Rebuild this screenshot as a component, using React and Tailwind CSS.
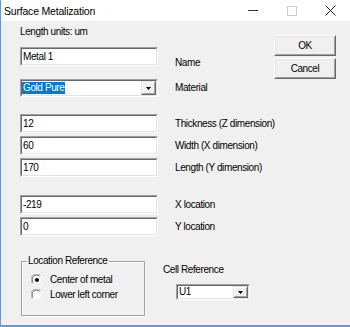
import React from "react";

function Sunken({ className, children }) {
  return (
    <div className={`border border-t-[#a0a0a0] border-l-[#a0a0a0] border-r-white border-b-white ${className}`}>
      <div className="h-full w-full border border-t-[#696969] border-l-[#696969] border-r-[#e3e3e3] border-b-[#e3e3e3] bg-white flex items-center">
        {children}
      </div>
    </div>
  );
}

function Arrow() {
  return (
    <div className="h-full w-[15px] ml-auto border border-t-[#e3e3e3] border-l-[#e3e3e3] border-r-[#696969] border-b-[#696969] bg-[#f0f0f0]">
      <div className="h-full w-full border border-t-white border-l-white border-r-[#a0a0a0] border-b-[#a0a0a0] flex items-center justify-center">
        <svg width="5" height="3" viewBox="0 0 5 3">
          <path d="M0 0H5L2.5 3Z" fill="#000" />
        </svg>
      </div>
    </div>
  );
}

function Button({ children }) {
  return (
    <div className="h-[21px] w-[62px] border border-t-white border-l-white border-r-[#696969] border-b-[#696969] bg-[#f0f0f0]">
      <div className="h-full w-full border border-t-[#e3e3e3] border-l-[#e3e3e3] border-r-[#a0a0a0] border-b-[#a0a0a0] flex items-center justify-center">
        {children}
      </div>
    </div>
  );
}

function Radio({ checked }) {
  return (
    <svg width="12" height="12" viewBox="0 0 12 12">
      <circle cx="6" cy="6" r="5.5" fill="#fff" />
      <path d="M1.5 9.5A5 5 0 0 1 9.5 1.5" fill="none" stroke="#a0a0a0" strokeWidth="1" />
      <path d="M2.4 8.6A3.8 3.8 0 0 1 8.6 2.4" fill="none" stroke="#696969" strokeWidth="1" />
      <path d="M10.5 2.5A5 5 0 0 1 2.5 10.5" fill="none" stroke="#ffffff" strokeWidth="1" />
      <path d="M9.6 3.4A3.8 3.8 0 0 1 3.4 9.6" fill="none" stroke="#e3e3e3" strokeWidth="1" />
      {checked && <circle cx="6" cy="6" r="2" fill="#000" />}
    </svg>
  );
}

function Row({ value, label, top }) {
  return (
    <div className={`flex items-center ${top}`}>
      <Sunken className="w-[138px] h-[19px] shrink-0">
        <span className="pl-[1px]">{value}</span>
      </Sunken>
      <span className="ml-[17px] whitespace-nowrap">{label}</span>
    </div>
  );
}

export default function App() {
  return (
    <div className="w-[350px] h-[327px] bg-[#f0f0f0] border-l border-b-2 border-[#5a9ee0] font-['Liberation_Sans',Arial,sans-serif] text-[10px] tracking-[-0.4px] leading-[12px] text-black flex flex-col overflow-hidden">
      <div className="h-[21px] bg-white flex items-center shrink-0">
        <span className="pl-[3px] text-[10.5px] tracking-[-0.2px]">Surface Metalization</span>
        <div className="ml-auto flex h-full">
          <div className="w-[39px] flex items-center justify-center">
            <div className="w-[10px] h-px bg-[#333]" />
          </div>
          <div className="w-[39px] flex items-center justify-center">
            <div className="w-[10px] h-[10px] border border-[#cccccc]" />
          </div>
          <div className="w-[39px] flex items-center justify-center">
            <svg width="11" height="11" viewBox="0 0 11 11">
              <path d="M0.5 0.5L10.5 10.5M10.5 0.5L0.5 10.5" stroke="#222" strokeWidth="1" />
            </svg>
          </div>
        </div>
      </div>

      <div className="flex">
        <div className="flex flex-col pl-[19px] flex-1 min-w-0 whitespace-nowrap">
          <div className="mt-[5px] h-[12px]">Length units: um</div>
          <div className="flex items-start mt-[9px]">
            <Sunken className="w-[138px] h-[19px] shrink-0">
              <span className="pl-[1px]">Metal 1</span>
            </Sunken>
            <span className="ml-[17px] mt-[10px]">Name</span>
          </div>
          <div className="flex items-center mt-[10px]">
            <Sunken className="w-[138px] h-[18px] shrink-0">
              <span className="h-[12px] bg-[#0078d7] text-white px-[1px]">Gold Pure</span>
              <Arrow />
            </Sunken>
            <span className="ml-[17px]">Material</span>
          </div>
          <Row value="12" label="Thickness (Z dimension)" top="mt-[17px]" />
          <Row value="60" label="Width (X dimension)" top="mt-[3px]" />
          <Row value="170" label="Length (Y dimension)" top="mt-[3px]" />
          <Row value="-219" label="X location" top="mt-[18px]" />
          <Row value="0" label="Y location" top="mt-[3px]" />
        </div>
        <div className="flex flex-col mt-[14px] mr-[14px] gap-[2px] shrink-0">
          <Button>OK</Button>
          <Button>Cancel</Button>
        </div>
      </div>

      <div className="flex mt-[19px]">
        <fieldset className="ml-[20px] w-[124px] h-[61px] border border-[#a0a0a0] shadow-[inset_1px_1px_0_#fff,1px_1px_0_#fff]">
          <legend className="ml-[5px] px-[1px] leading-[12px]">Location Reference</legend>
          <div className="flex flex-col gap-[3px] mt-[7px] pl-[9px]">
            <div className="flex items-center gap-[7px]">
              <Radio checked />
              <span>Center of metal</span>
            </div>
            <div className="flex items-center gap-[7px]">
              <Radio />
              <span>Lower left corner</span>
            </div>
          </div>
        </fieldset>
        <div className="flex flex-col ml-[18px]">
          <span className="mt-[9px]">Cell Reference</span>
          <Sunken className="mt-[8px] ml-[13px] w-[74px] h-[16px]">
            <span className="pl-[1px]">U1</span>
            <Arrow />
          </Sunken>
        </div>
      </div>
    </div>
  );
}
